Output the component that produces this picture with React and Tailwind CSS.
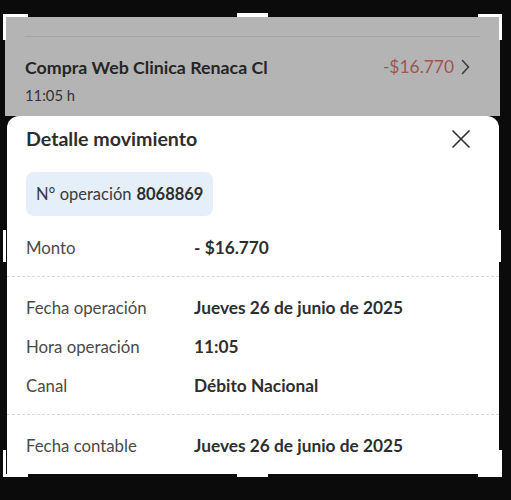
import React from 'react';

const rowsTop = [
  { label: 'Fecha operación', value: 'Jueves 26 de junio de 2025' },
  { label: 'Hora operación', value: '11:05' },
  { label: 'Canal', value: 'Débito Nacional' },
];

function Row({ label, value }) {
  return (
    <div className="flex items-center h-[39px] px-[19px]">
      <span className="w-[168px] text-[16.8px] text-[#4a4a4a]">{label}</span>
      <span className="font-bold text-[17.3px] text-[#2e2e2e]">{value}</span>
    </div>
  );
}

// crop handles of the screenshot editor, drawn over the picture
function Handles() {
  return (
    <svg className="absolute inset-0 pointer-events-none" width="511" height="500" viewBox="0 0 511 500">
      <g fill="#fff">
        <rect x="3" y="14" width="25" height="3" />
        <rect x="3" y="14" width="3" height="26" />
        <rect x="237" y="13" width="31" height="4" />
        <rect x="478" y="14" width="24" height="3" />
        <rect x="499" y="14" width="3" height="26" />
        <rect x="3" y="230" width="3" height="32" />
        <rect x="498" y="230" width="3" height="32" />
        <rect x="3" y="474" width="25" height="3" />
        <rect x="3" y="450" width="3" height="27" />
        <rect x="237" y="473" width="31" height="4" />
        <rect x="478" y="474" width="24" height="3" />
        <rect x="499" y="450" width="3" height="27" />
      </g>
    </svg>
  );
}

export default function App() {
  return (
    <div
      className="relative w-[511px] h-[500px] bg-[#0b0b0b] pt-[17px] pl-[5px] overflow-hidden"
      style={{ fontFamily: 'Lato, "Noto Sans", sans-serif' }}
    >
      <div className="w-[495px] h-[457px] flex flex-col overflow-hidden">
        {/* dimmed list behind the sheet */}
        <div className="h-[99px] bg-[#b4b4b4] pt-[19px] px-[20px] shrink-0">
          <div className="border-t border-[#a6a6a6]" />
          <div className="flex items-center justify-between mt-[19px] h-[22px]">
            <span className="font-bold text-[17.8px] text-[#262626]">Compra Web Clinica Renaca Cl</span>
            <div className="flex items-center gap-[7px] pr-[10px]">
              <span className="text-[17.4px] text-[#9e5652]">-$16.770</span>
              <svg width="9" height="16" viewBox="0 0 9 16" fill="none">
                <path d="M1.5 1.5L7.5 8L1.5 14.5" stroke="#3c3c3c" strokeWidth="1.6" strokeLinecap="round" strokeLinejoin="round" />
              </svg>
            </div>
          </div>
          <div className="mt-[6px] text-[14.8px] text-[#333]">11:05 h</div>
        </div>

        {/* bottom sheet */}
        <div className="flex-1 bg-white rounded-t-[12px] ml-[2px] mr-[1px]">
          <div className="flex items-center justify-between h-[46px] px-[19px]">
            <span className="font-bold text-[19.6px] text-[#2e2e2e]">Detalle movimiento</span>
            <svg width="18" height="18" viewBox="0 0 18 18" fill="none" className="mr-[10px]">
              <path d="M1 1L17 17M17 1L1 17" stroke="#333" strokeWidth="1.7" strokeLinecap="round" />
            </svg>
          </div>

          <div className="mt-[10px] ml-[19px] inline-flex items-center h-[44px] px-[10px] rounded-[8px] bg-[#e5effa] text-[16.5px] text-[#3a3a3a]">
            N° operación<span className="ml-[5px] font-bold text-[#2e2e2e]">8068869</span>
          </div>

          <div className="mt-[12px] flex items-center h-[40px] px-[19px]">
            <span className="w-[168px] text-[16.8px] text-[#4a4a4a]">Monto</span>
            <span className="font-bold text-[17.3px] text-[#2e2e2e]">- $16.770</span>
          </div>

          <div className="mt-[8px] border-t border-dashed border-[#dadada]" />

          <div className="mt-[11px]">
            {rowsTop.map((r) => (
              <Row key={r.label} label={r.label} value={r.value} />
            ))}
          </div>

          <div className="mt-[9px] border-t border-dashed border-[#dadada]" />

          <div className="mt-[11px]">
            <Row label="Fecha contable" value="Jueves 26 de junio de 2025" />
          </div>
        </div>
      </div>

      <Handles />
    </div>
  );
}
